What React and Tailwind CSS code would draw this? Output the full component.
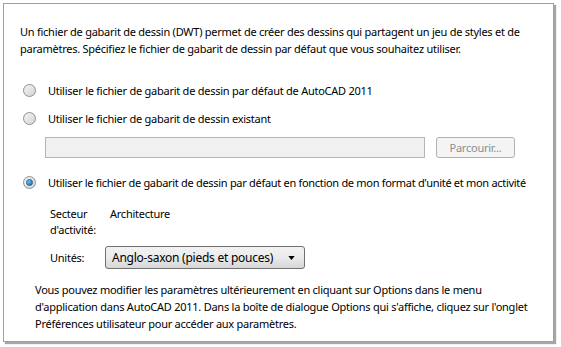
import React from 'react'

function Radio({ checked = false }) {
    return (
        <span className="relative flex h-[13px] w-[13px] shrink-0 items-center justify-center rounded-full border border-[#8f8f8f] bg-gradient-to-br from-[#f4f4f4] to-[#d4d4d4]">
            {checked && (
                <span className="h-[7px] w-[7px] rounded-full border border-[#1c5a8c] bg-gradient-to-br from-[#7fd1f7] to-[#1a6db3]" />
            )}
        </span>
    )
}

export default function App() {
    return (
        <div className="h-[347px] w-[561px] overflow-hidden bg-white text-[11px] leading-[17px] tracking-[-0.25px] whitespace-nowrap text-black" style={{ fontFamily: '"Noto Sans", "Open Sans", sans-serif' }}>
            <div className="ml-[3px] pt-[3px]">
                <div className="h-[339px] w-[551px] border border-[#a0a0a0] bg-white pl-[16px] pr-4 pt-[19px] shadow-[2px_2px_1px_rgba(0,0,0,0.35)]">
                    <p>
                        Un fichier de gabarit de dessin (DWT) permet de créer des dessins qui partagent un jeu de styles et de
                        <br />
                        paramètres. Spécifiez le fichier de gabarit de dessin par défaut que vous souhaitez utiliser.
                    </p>

                    {/* ── Options ── */}
                    <div className="mt-[25px] flex items-center gap-[12px] pl-[3px]">
                        <Radio />
                        <span>Utiliser le fichier de gabarit de dessin par défaut de AutoCAD 2011</span>
                    </div>
                    <div className="mt-[11px] flex items-center gap-[12px] pl-[3px]">
                        <Radio />
                        <span>Utiliser le fichier de gabarit de dessin existant</span>
                    </div>

                    <div className="mt-[10px] flex items-center gap-[11px] pl-[25px]">
                        <div className="h-[21px] w-[380px] border border-[#b5b5b5] bg-[#f0f0f0]" />
                        <button className="flex h-[21px] w-[79px] items-center justify-center rounded-[3px] border border-[#adb2b5] bg-[#f4f4f4] text-[#8d8d8d]">
                            Parcourir...
                        </button>
                    </div>

                    <div className="mt-[16px] flex items-center gap-[12px] pl-[3px] tracking-[-0.3px]">
                        <Radio checked />
                        <span>Utiliser le fichier de gabarit de dessin par défaut en fonction de mon format d'unité et mon activité</span>
                    </div>

                    {/* ── Activity / units ── */}
                    <div className="mt-[15px] flex pl-[30px]">
                        <div className="w-[60px] leading-[16px]">
                            Secteur
                            <br />
                            d'activité:
                        </div>
                        <div className="leading-[16px]">Architecture</div>
                    </div>

                    <div className="mt-[8px] flex items-center pl-[30px]">
                        <span className="w-[55px]">Unités:</span>
                        <div className="flex h-[23px] w-[200px] items-center justify-between rounded-[3px] border border-[#707070] bg-gradient-to-b from-[#f2f2f2] via-[#ebebeb] to-[#d6d6d6] pl-[6px] pr-[9px]">
                            <span className="text-[12px]">Anglo-saxon (pieds et pouces)</span>
                            <svg viewBox="0 0 8 5" className="h-[4px] w-[7px]">
                                <polygon points="0,0 8,0 4,5" fill="#000" />
                            </svg>
                        </div>
                    </div>

                    <p className="mt-[12px] pl-[15px]">
                        Vous pouvez modifier les paramètres ultérieurement en cliquant sur Options dans le menu
                        <br />
                        d'application dans AutoCAD 2011. Dans la boîte de dialogue Options qui s'affiche, cliquez sur l'onglet
                        <br />
                        Préférences utilisateur pour accéder aux paramètres.
                    </p>
                </div>
            </div>
        </div>
    )
}
